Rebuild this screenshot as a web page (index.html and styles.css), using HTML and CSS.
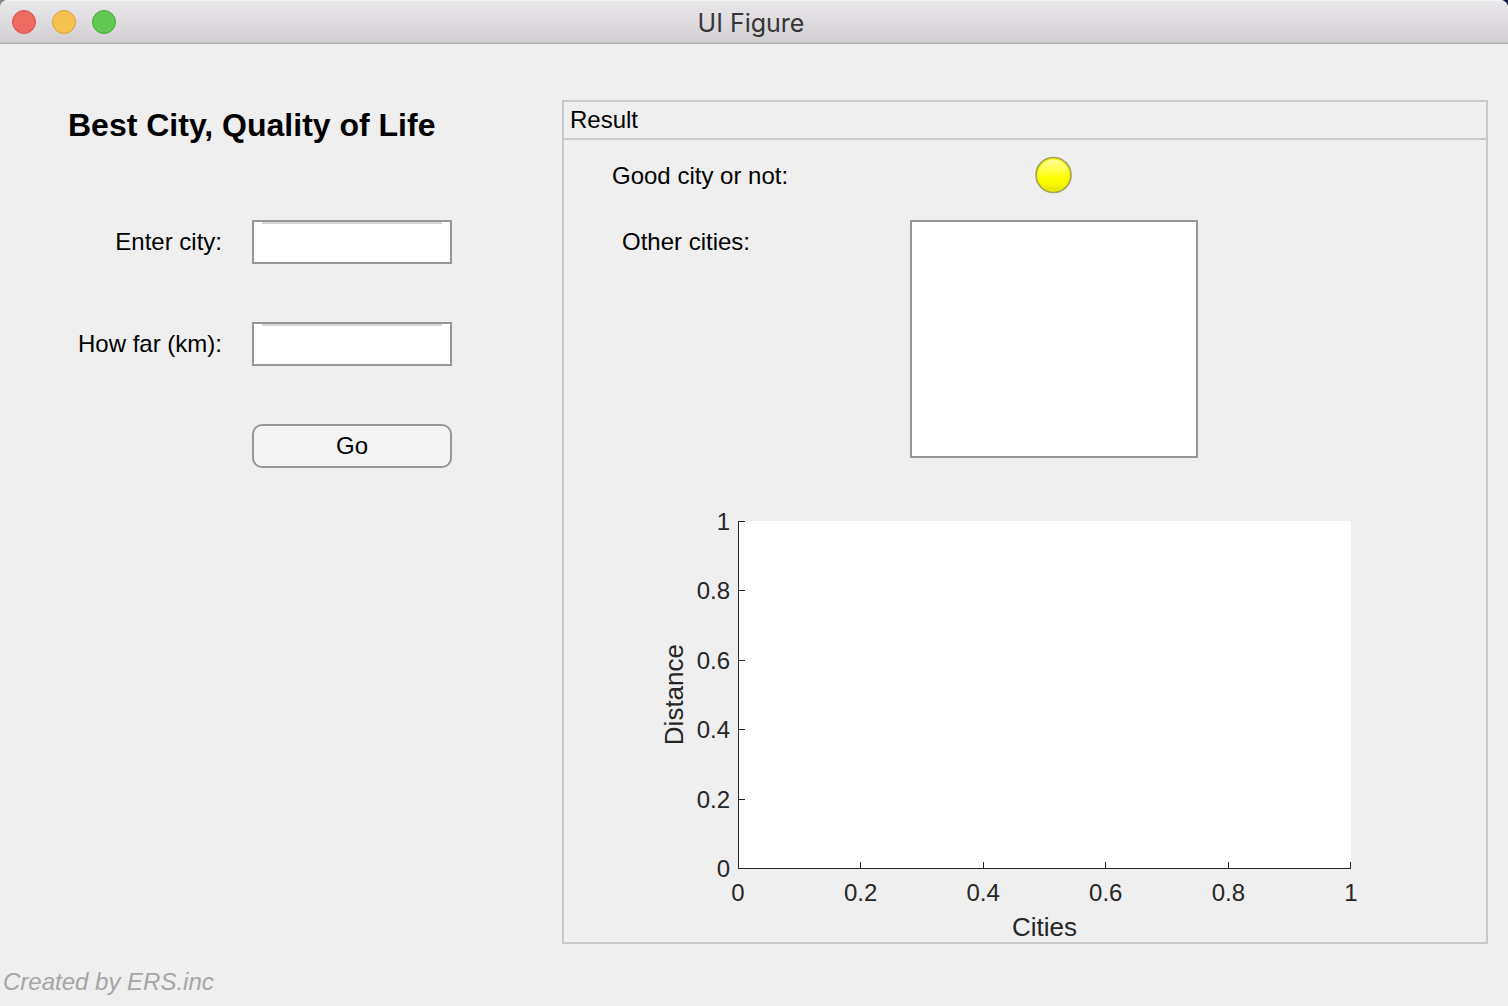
FILE: index.html
```html
<!DOCTYPE html>
<html lang="en">
<head>
<meta charset="utf-8">
<meta name="viewport" content="width=device-width, initial-scale=1">
<title>UI Figure</title>
<link rel="stylesheet" href="styles.css">
</head>
<body>
<div class="window">
  <header class="titlebar">
    <div class="controls">
      <button class="control control-close" type="button" aria-label="Close"></button>
      <button class="control control-minimize" type="button" aria-label="Minimize"></button>
      <button class="control control-zoom" type="button" aria-label="Zoom"></button>
    </div>
    <div class="window-title">UI Figure</div>
  </header>
  <main class="content">
    <section class="search">
      <h1 class="heading">Best City, Quality of Life</h1>
      <form class="form">
        <label class="form-label" for="city">Enter city:</label>
        <input class="field" id="city" type="text">
        <label class="form-label" for="distance">How far (km):</label>
        <input class="field" id="distance" type="text">
        <button class="go" type="button">Go</button>
      </form>
    </section>
    <section class="panel">
      <h2 class="panel-title">Result</h2>
      <div class="readouts">
        <span class="readout-label">Good city or not:</span>
        <svg class="lamp" viewBox="0 0 38 38" role="img" aria-label="Yellow lamp">
          <defs>
            <linearGradient id="glass" x1="0" y1="0" x2="0" y2="1">
              <stop offset="0" stop-color="#ffff9c"/>
              <stop offset="0.5" stop-color="#ffff20"/>
              <stop offset="0.56" stop-color="#ffff00"/>
              <stop offset="0.8" stop-color="#f8f800"/>
              <stop offset="1" stop-color="#e0e000"/>
            </linearGradient>
          </defs>
          <circle cx="18.5" cy="19" r="17.5" fill="#f4f400" stroke="#a3a356" stroke-width="1.6"/>
          <circle cx="18.5" cy="19" r="15.5" fill="url(#glass)"/>
        </svg>
        <label class="readout-label readout-label-list" for="others">Other cities:</label>
        <select class="list" id="others" size="8"></select>
      </div>
      <div class="chart">
        <div class="y-label">Distance</div>
        <ul class="ticks y-ticks">
          <li>1</li><li>0.8</li><li>0.6</li><li>0.4</li><li>0.2</li><li>0</li>
        </ul>
        <div class="plot">
          <div class="marks y-marks"><i></i><i></i><i></i><i></i><i></i><i></i></div>
          <div class="marks x-marks"><i></i><i></i><i></i><i></i><i></i><i></i></div>
        </div>
        <ul class="ticks x-ticks">
          <li>0</li><li>0.2</li><li>0.4</li><li>0.6</li><li>0.8</li><li>1</li>
        </ul>
        <div class="x-label">Cities</div>
      </div>
    </section>
  </main>
  <footer class="footer">Created by ERS.inc</footer>
</div>
</body>
</html>
```
FILE: styles.css
```css
* {
  box-sizing: border-box;
}

body {
  margin: 0;
  background: linear-gradient(90deg, #8a8a8e 50%, #0d1440 50%);
  color: #000;
  font: 24px/28px "Liberation Sans", Arial, Helvetica, sans-serif;
}

h1, h2, ul {
  margin: 0;
  padding: 0;
}

.window {
  display: flex;
  flex-direction: column;
  min-height: 100vh;
  overflow: hidden;
  border-radius: 8px 8px 0 0;
  background: #efefef;
}

.titlebar {
  display: grid;
  grid-template-columns: 1fr auto 1fr;
  align-items: center;
  height: 44px;
  padding: 0 18px 0 12px;
  border-top: 1px solid #f5f4f5;
  border-bottom: 1px solid #adabad;
  background: linear-gradient(#e9e7e9, #d1cfd1);
  box-shadow: inset 0 -1px #c4c2c4;
}

.controls {
  display: flex;
  gap: 16px;
}

.control {
  width: 24px;
  height: 24px;
  padding: 0;
  border: 1px solid;
  border-radius: 50%;
}

.control-close {
  border-color: #d9544b;
  background: #ed6b60;
}

.control-minimize {
  border-color: #d8a03e;
  background: #f5c250;
}

.control-zoom {
  border-color: #4ba73d;
  background: #62c955;
}

.window-title {
  padding-top: 2px;
  color: #363537;
  font: 25px/28px Inter, sans-serif;
}

.content {
  display: grid;
  grid-template-columns: 562px minmax(0, 1fr);
  flex: 1;
  padding: 56px 20px 0 0;
}

.heading {
  margin-bottom: 70px;
  padding-left: 68px;
  font-size: 32px;
  line-height: 50px;
}

.form {
  display: grid;
  grid-template-columns: 222px 200px;
  grid-auto-rows: 44px;
  align-items: center;
  gap: 58px 30px;
}

.form-label {
  text-align: right;
}

.field,
.go {
  height: 44px;
  border: 2px solid #969696;
  color: inherit;
  font: inherit;
}

.field {
  width: 100%;
  padding: 0 8px;
  border-radius: 0;
  background: #fff linear-gradient(#d6d6d6, #d6d6d6) 8px 0 / calc(100% - 16px) 2px no-repeat;
}

.go {
  grid-column: 2;
  padding: 0;
  border-radius: 10px;
  background: #f4f4f4;
}

.panel {
  display: flex;
  flex-direction: column;
  border: 2px solid #c9c9c9;
}

.panel-title {
  padding: 4px 6px;
  border-bottom: 2px solid #c9c9c9;
  font-size: 24px;
  font-weight: normal;
  line-height: 28px;
}

.readouts {
  display: grid;
  grid-template-columns: 298px 288px;
  row-gap: 26px;
  padding: 16px 48px 0;
}

.readout-label {
  padding-top: 6px;
}

.readout-label-list {
  padding: 8px 10px 0;
}

.lamp {
  width: 38px;
  height: 38px;
  justify-self: center;
}

.list {
  height: 238px;
  border: 2px solid #969696;
  border-radius: 0;
  background: #fff;
  font: inherit;
}

.chart {
  display: grid;
  flex: 1;
  grid-template-columns: 32px 36px minmax(0, 1fr);
  grid-template-rows: minmax(240px, 1fr) 38px 34px;
  column-gap: 6px;
  margin: 63px 135px 1px 94px;
  color: #262626;
}

.y-label {
  justify-self: center;
  align-self: center;
  font-size: 26px;
  writing-mode: vertical-rl;
  transform: rotate(180deg);
}

.ticks {
  display: flex;
  justify-content: space-between;
  list-style: none;
}

.y-ticks {
  flex-direction: column;
  padding: 1px 2px 0 0;
  text-align: right;
}

.y-ticks li {
  height: 0;
  line-height: 0;
}

.plot {
  display: grid;
  border-bottom: 1px solid #262626;
  border-left: 1px solid #262626;
  background: #fff;
}

/* Marks overlap the axis lines so that the end marks join them. */
.marks {
  display: flex;
  grid-area: 1 / 1;
  justify-content: space-between;
  margin: 0 0 -1px -1px;
}

.marks i {
  background: #262626;
}

.y-marks {
  flex-direction: column;
}

.y-marks i {
  width: 7px;
  height: 1px;
}

.x-marks {
  align-items: flex-end;
}

.x-marks i {
  width: 1px;
  height: 7px;
}

.x-ticks {
  grid-column: 3;
  padding-top: 10px;
}

.x-ticks li {
  display: flex;
  justify-content: center;
  width: 0;
}

.x-label {
  grid-column: 3;
  padding-top: 6px;
  font-size: 26px;
  text-align: center;
}

.footer {
  padding: 24px 3px 10px;
  color: #a6a6a6;
  font-style: italic;
}
```
